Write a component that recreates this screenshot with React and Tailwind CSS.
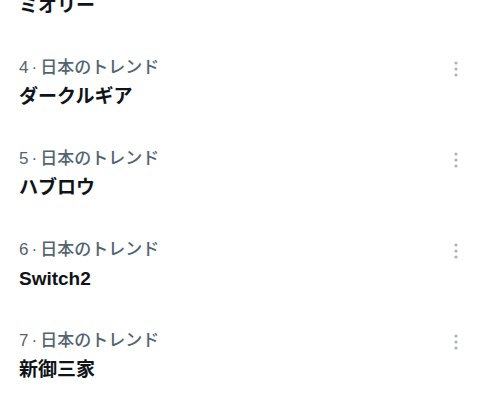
const trends = [
  { rank: 3, name: "ミオリー" },
  { rank: 4, name: "ダークルギア" },
  { rank: 5, name: "ハブロウ" },
  { rank: 6, name: "Switch2" },
  { rank: 7, name: "新御三家" },
];

function MoreIcon() {
  return (
    <svg width="6" height="18" viewBox="0 0 6 18" className="text-[#aab4bd]">
      <circle cx="3" cy="3" r="1.6" fill="currentColor" />
      <circle cx="3" cy="9" r="1.6" fill="currentColor" />
      <circle cx="3" cy="15" r="1.6" fill="currentColor" />
    </svg>
  );
}

export default function App() {
  return (
    <main
      className="h-[410px] w-[480px] overflow-hidden bg-white"
      style={{ fontFamily: '"Liberation Sans", "Noto Sans CJK JP", sans-serif' }}
    >
      <div className="-mt-[53px] flex flex-col">
        {trends.map((t) => (
          <div key={t.rank} className="flex h-[91px] items-start justify-between py-5 pl-[19px] pr-[21px]">
            <div className="flex flex-col gap-[7px]">
              <div className="flex items-center text-[17px] font-medium leading-[20px] text-[#536471]">
                <span>{t.rank}</span>
                <span className="mx-[3px]">·</span>
                <span>日本のトレンド</span>
              </div>
              <div className="text-[19px] font-bold leading-[24px] text-[#0f1419]">{t.name}</div>
            </div>
            <div className="pt-[2px]">
              <MoreIcon />
            </div>
          </div>
        ))}
      </div>
    </main>
  );
}
